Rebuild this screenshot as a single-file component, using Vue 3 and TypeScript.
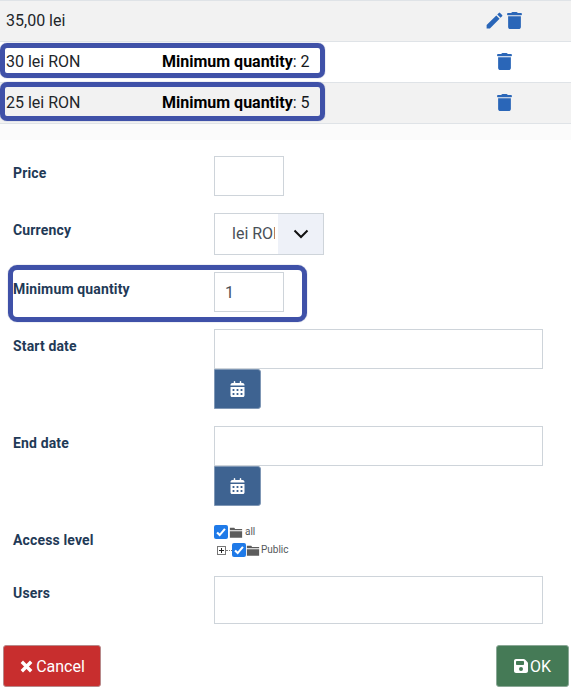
<script setup lang="ts">
const prices = [
  { label: '35,00 lei', min: '', edit: true },
  { label: '30 lei RON', min: '2', edit: false },
  { label: '25 lei RON', min: '5', edit: false }
]

const trash = 'M135.2 17.7C140.6 6.8 151.7 0 163.8 0h120.4c12.1 0 23.2 6.8 28.6 17.7L320 32h96c17.7 0 32 14.3 32 32s-14.3 32-32 32H32C14.3 96 0 81.7 0 64s14.3-32 32-32h96l7.2-14.3zM32 128h384v320c0 35.3-28.7 64-64 64H96c-35.3 0-64-28.7-64-64V128z'
const calendar = 'M128 0c13.3 0 24 10.7 24 24v40h144V24c0-13.3 10.7-24 24-24s24 10.7 24 24v40h40c35.3 0 64 28.7 64 64v16H0v-16c0-35.3 28.7-64 64-64h40V24c0-13.3 10.7-24 24-24zM0 192h448v272c0 26.5-21.5 48-48 48H48c-26.5 0-48-21.5-48-48V192zm64 80v32c0 8.8 7.2 16 16 16h32c8.8 0 16-7.2 16-16v-32c0-8.8-7.2-16-16-16H80c-8.800 0-16 7.200-16 16zm128 0v32c0 8.8 7.2 16 16 16h32c8.800 0 16-7.200 16-16v-32c0-8.800-7.200-16-16-16h-32c-8.800 0-16 7.200-16 16zm144-16c-8.800 0-16 7.200-16 16v32c0 8.800 7.200 16 16 16h32c8.800 0 16-7.200 16-16v-32c0-8.800-7.200-16-16-16h-32zM64 400v32c0 8.800 7.200 16 16 16h32c8.800 0 16-7.200 16-16v-32c0-8.800-7.200-16-16-16H80c-8.800 0-16 7.200-16 16zm144-16c-8.800 0-16 7.200-16 16v32c0 8.800 7.200 16 16 16h32c8.800 0 16-7.200 16-16v-32c0-8.800-7.200-16-16-16h-32zm112 16v32c0 8.800 7.200 16 16 16h32c8.800 0 16-7.200 16-16v-32c0-8.800-7.200-16-16-16h-32c-8.800 0-16 7.200-16 16z'
</script>

<template>
  <div class="page">
    <div class="prices">
      <div v-for="(p, i) in prices" :key="i" class="price-row">
        <span class="price-label">{{ p.label }}</span>
        <span class="price-min">
          <template v-if="p.min"><b>Minimum quantity</b>: {{ p.min }}</template>
        </span>
        <span class="price-actions" :class="{ single: !p.edit }">
          <svg v-if="p.edit" class="ico-edit" viewBox="0 0 24 24"><path d="M3 17.25V21h3.75L17.81 9.94l-3.75-3.750L3 17.250zM20.710 7.040a1 1 0 0 0 0-1.410l-2.340-2.340a1 1 0 0 0-1.410 0l-1.830 1.830 3.750 3.750 1.830-1.830z" /></svg>
          <svg class="ico-trash" viewBox="0 0 448 512"><path :d="trash" /></svg>
        </span>
      </div>
      <div class="mark mark-a"></div>
      <div class="mark mark-b"></div>
    </div>
    <div class="prices-foot"></div>

    <form class="form" @submit.prevent>
      <div class="field f-price">
        <label>Price</label>
        <input class="input short" type="text" />
      </div>
      <div class="field f-currency">
        <label>Currency</label>
        <div class="select">
          <span class="select-value">lei RON</span>
          <span class="select-arrow">
            <svg viewBox="0 0 16 16"><path d="M1.500 4.500 8 11l6.500-6.500" /></svg>
          </span>
        </div>
      </div>
      <div class="field f-min">
        <label>Minimum quantity</label>
        <input class="input short" type="text" value="1" />
        <div class="mark mark-c"></div>
      </div>
      <div class="field f-date">
        <label>Start date</label>
        <div>
          <input class="input wide" type="text" />
          <button class="cal" type="button"><svg viewBox="0 0 448 512"><path :d="calendar" /></svg></button>
        </div>
      </div>
      <div class="field f-date">
        <label>End date</label>
        <div>
          <input class="input wide" type="text" />
          <button class="cal" type="button"><svg viewBox="0 0 448 512"><path :d="calendar" /></svg></button>
        </div>
      </div>
      <div class="field f-access">
        <label>Access level</label>
        <div class="tree">
          <div class="node">
            <span class="check"><svg viewBox="0 0 16 16"><path d="M3.500 8.500 6.500 11.500 12.500 4.500" /></svg></span>
            <svg class="folder" viewBox="0 0 16 14"><path d="M1 3V1.500h5L7 3h8v1.500H1zM1 5.500h14V13H1z" /></svg>
            <span class="node-text">all</span>
          </div>
          <div class="node child">
            <span class="plus"></span>
            <span class="dots"></span>
            <span class="check"><svg viewBox="0 0 16 16"><path d="M3.500 8.500 6.500 11.500 12.500 4.500" /></svg></span>
            <svg class="folder" viewBox="0 0 16 14"><path d="M1 3V1.500h5L7 3h8v1.500H1zM1 5.500h14V13H1z" /></svg>
            <span class="node-text">Public</span>
          </div>
        </div>
      </div>
      <div class="field f-users">
        <label>Users</label>
        <textarea class="input wide area"></textarea>
      </div>
      <div class="actions">
        <button class="btn btn-cancel" type="button">
          <svg viewBox="0 0 16 16"><path d="M3 3 13 13M13 3 3 13" /></svg>
          Cancel
        </button>
        <button class="btn btn-ok" type="submit">
          <svg class="save" viewBox="0 0 448 512"><path d="M64 32C28.700 32 0 60.700 0 96v320c0 35.300 28.700 64 64 64h320c35.300 0 64-28.700 64-64V173.300c0-17-6.700-33.300-18.700-45.300L352 50.700C340 38.700 323.700 32 306.700 32H64zm0 96c0-17.700 14.300-32 32-32h192c17.700 0 32 14.300 32 32v64c0 17.700-14.300 32-32 32H96c-17.700 0-32-14.300-32-32v-64zm160 160a64 64 0 1 1 0 128 64 64 0 1 1 0-128z" /></svg>
          OK
        </button>
      </div>
    </form>
  </div>
</template>

<style scoped>
.page {
  width: 571px;
  height: 690px;
  overflow: hidden;
  background: #fff;
  font-family: Roboto, "Liberation Sans", sans-serif;
  color: #22262a;
}

.prices {
  position: relative;
}

.price-row {
  display: flex;
  align-items: center;
  height: 40px;
  border-top: 1px solid #dfe3e7;
  background: #f2f2f2;
  font-size: 16px;
  padding-left: 6px;
}

.price-row:nth-child(2) {
  background: #fff;
}

.price-row:nth-child(3) {
  border-bottom: 1px solid #dfe3e7;
}

.price-label {
  width: 156px;
  margin-top: -2px;
}

.price-min {
  width: 317px;
  color: #16191c;
  margin-top: -2px;
}

.price-min b {
  font-weight: 700;
  color: #000;
}

.price-actions {
  display: flex;
  align-items: center;
  gap: 2px;
  margin-top: -2px;
}

.price-actions.single {
  margin-left: 18px;
}

.ico-edit {
  width: 21px;
  height: 21px;
  fill: #2a66b8;
  margin-left: 5px;
}

.ico-trash {
  width: 15px;
  height: 17px;
  fill: #2a66b8;
}

.prices-foot {
  height: 16px;
  background: #fbfbfb;
}

.mark {
  position: absolute;
  border: 5px solid #3f51a8;
  border-radius: 7px;
  box-shadow: 0 0 1px #5a6699;
  pointer-events: none;
}

.mark-a {
  left: 0;
  top: 43px;
  width: 315px;
  height: 25px;
}

.mark-b {
  left: 0;
  top: 82px;
  width: 315px;
  height: 29px;
}

.mark-c {
  left: 8px;
  top: -7px;
  width: 289px;
  height: 47px;
  border-radius: 9px;
}

.form {
  position: relative;
  padding-top: 16px;
}

.field {
  position: relative;
  display: grid;
  grid-template-columns: 214px 1fr;
  align-items: start;
}

.field label {
  padding-left: 13px;
  font-size: 14px;
  font-weight: 700;
  letter-spacing: 0.15px;
  color: #1f3a57;
  padding-top: 9px;
  line-height: 17px;
}

.f-price {
  margin-bottom: 17px;
}

.f-currency {
  margin-bottom: 17px;
}

.f-min {
  margin-bottom: 17px;
}

.f-date {
  margin-bottom: 17px;
}

.f-access {
  margin-bottom: 2px;
  height: 51px;
}

.f-access label {
  padding-top: 0;
  margin-top: 9px;
}

.input {
  display: block;
  box-sizing: border-box;
  height: 40px;
  border: 1px solid #ced4da;
  background: #fff;
  padding: 0 10px;
  font-family: inherit;
  font-size: 16px;
  color: #495057;
  border-radius: 0;
  outline: none;
}

.short {
  width: 70px;
}

.wide {
  width: 329px;
}

.area {
  height: 48px;
  resize: none;
}

.select {
  display: flex;
  box-sizing: border-box;
  width: 110px;
  height: 42px;
  border: 1px solid #ced4da;
  font-size: 16px;
  color: #495057;
}

.select-value {
  box-sizing: border-box;
  width: 60px;
  margin-right: 3px;
  padding-left: 17px;
  line-height: 40px;
  white-space: nowrap;
  overflow: hidden;
  flex-shrink: 0;
}

.select-arrow {
  flex: 1;
  display: flex;
  align-items: center;
  justify-content: center;
  background: #eef1f8;
}

.select-arrow svg {
  width: 16px;
  height: 16px;
  fill: none;
  stroke: #111;
  stroke-width: 2;
}

.cal {
  display: flex;
  align-items: center;
  justify-content: center;
  width: 47px;
  height: 40px;
  padding: 0;
  border: 1px solid #7f97b5;
  border-radius: 0 3px 3px 0;
  background: #3e6391;
}

.cal svg {
  width: 15px;
  height: 16px;
  fill: #fff;
}

.tree {
  font-size: 10px;
  color: #55595c;
}

.node {
  display: flex;
  align-items: center;
  height: 18px;
  gap: 1px;
}

.node.child {
  height: 18px;
  padding-left: 3px;
  gap: 0;
}

.check {
  display: flex;
  box-sizing: border-box;
  width: 14px;
  height: 14px;
  border-radius: 2px;
  background: #1f7ae8;
}

.check svg {
  width: 14px;
  height: 14px;
  fill: none;
  stroke: #fff;
  stroke-width: 2.4;
}

.folder {
  width: 14px;
  height: 13px;
  fill: #5c5c5c;
}

.plus {
  position: relative;
  box-sizing: border-box;
  width: 9px;
  height: 9px;
  border: 1px solid #777;
  background: linear-gradient(#222, #222) center / 5px 1px no-repeat, linear-gradient(#222, #222) center / 1px 5px no-repeat;
}

.dots {
  width: 6px;
  border-top: 1px dotted #777;
}

.node-text {
  padding-left: 1px;
  line-height: 12px;
}

.actions {
  display: flex;
  justify-content: space-between;
  padding: 0 2px 0 3px;
  margin-top: 21px;
}

.btn {
  display: inline-flex;
  align-items: center;
  justify-content: center;
  gap: 2px;
  height: 42px;
  box-sizing: border-box;
  border-radius: 3px;
  color: #fff;
  font-family: inherit;
  font-size: 16px;
  padding: 0;
}

.btn svg {
  width: 15px;
  height: 15px;
  fill: none;
  stroke: #fff;
  stroke-width: 3.6;
}

.btn svg.save {
  width: 14px;
  height: 16px;
  fill: #fff;
  stroke: none;
}

.btn-cancel {
  width: 98px;
  background: #c82e2e;
  border: 1px solid #b8898a;
}

.btn-ok {
  width: 73px;
  background: #457a56;
  border: 1px solid #8aa896;
}
</style>
